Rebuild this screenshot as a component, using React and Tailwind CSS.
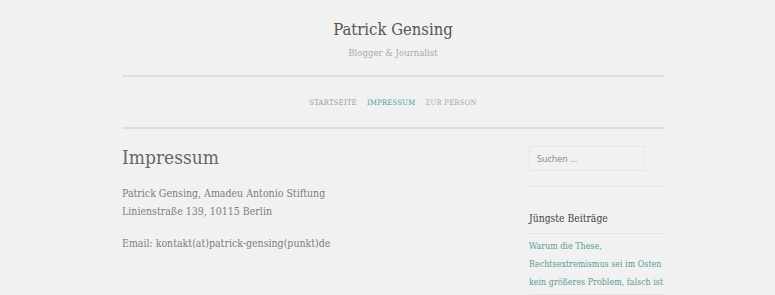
export default function App() {
  const font = { fontFamily: '"DejaVu Serif Condensed", "DejaVu Serif", serif' };
  return (
    <div className="min-h-[295px] w-[775px] overflow-hidden bg-[#f1f1f1] text-[#777]" style={font}>
      <div className="ml-[122px] w-[542px]">
        {/* Header */}
        <header className="pt-[19px] text-center">
          <h1 className="text-[16.5px] leading-[22px] text-[#555]">Patrick Gensing</h1>
          <p className="mt-[5px] text-[9.5px] leading-[14px] text-[#aaa]">Blogger &amp; Journalist</p>
        </header>

        {/* Navbar */}
        <nav className="mt-[15px] border-y-2 border-[#dedede]">
          <div className="flex h-[50px] items-center justify-center gap-[10px] pt-[2px] text-[7.5px] uppercase tracking-[0.3px]">
            <a href="#" className="text-[#999]">Startseite</a>
            <a href="#" className="text-[#4d9a9a]">Impressum</a>
            <a href="#" className="text-[#aaa]">Zur Person</a>
          </div>
        </nav>

        <div className="flex justify-between pt-[15px]">
          {/* Content */}
          <main className="w-[360px]">
            <h2 className="text-[19px] leading-[26px] text-[#666]">Impressum</h2>
            <div className="mt-[14px] text-[10.5px] leading-[18px] text-[#7d7d7d]">
              <p>Patrick Gensing, Amadeu Antonio Stiftung<br />Linienstraße 139, 10115 Berlin</p>
              <p className="mt-[14px]">Email: kontakt(at)patrick-gensing(punkt)de</p>
            </div>
          </main>

          {/* Sidebar */}
          <aside className="w-[135px]">
            <input
              type="text"
              placeholder="Suchen …"
              className="mt-[2px] h-[25px] w-[116px] border border-[#e6e6e6] bg-[#f1f1f1] px-[7px] text-[9px] text-[#777] placeholder:text-[#888] outline-none"
              style={{ fontFamily: '"Open Sans", sans-serif' }}
            />
            <div className="mt-[15px] border-t border-[#e4e4e4]" />
            <h3 className="mt-[24px] text-[10.3px] leading-[14px] text-[#444]">Jüngste Beiträge</h3>
            <div className="mt-[8px] border-t border-[#e4e4e4]" />
            <ul className="pt-[3px] text-[8.9px] leading-[18px] text-[#5d9a9a]">
              <li className="border-b border-[#e4e4e4] pb-[3px]">
                <a href="#">Warum die These, Rechtsextremismus sei im Osten kein größeres Problem, falsch ist</a>
              </li>
            </ul>
          </aside>
        </div>
      </div>
    </div>
  );
}
